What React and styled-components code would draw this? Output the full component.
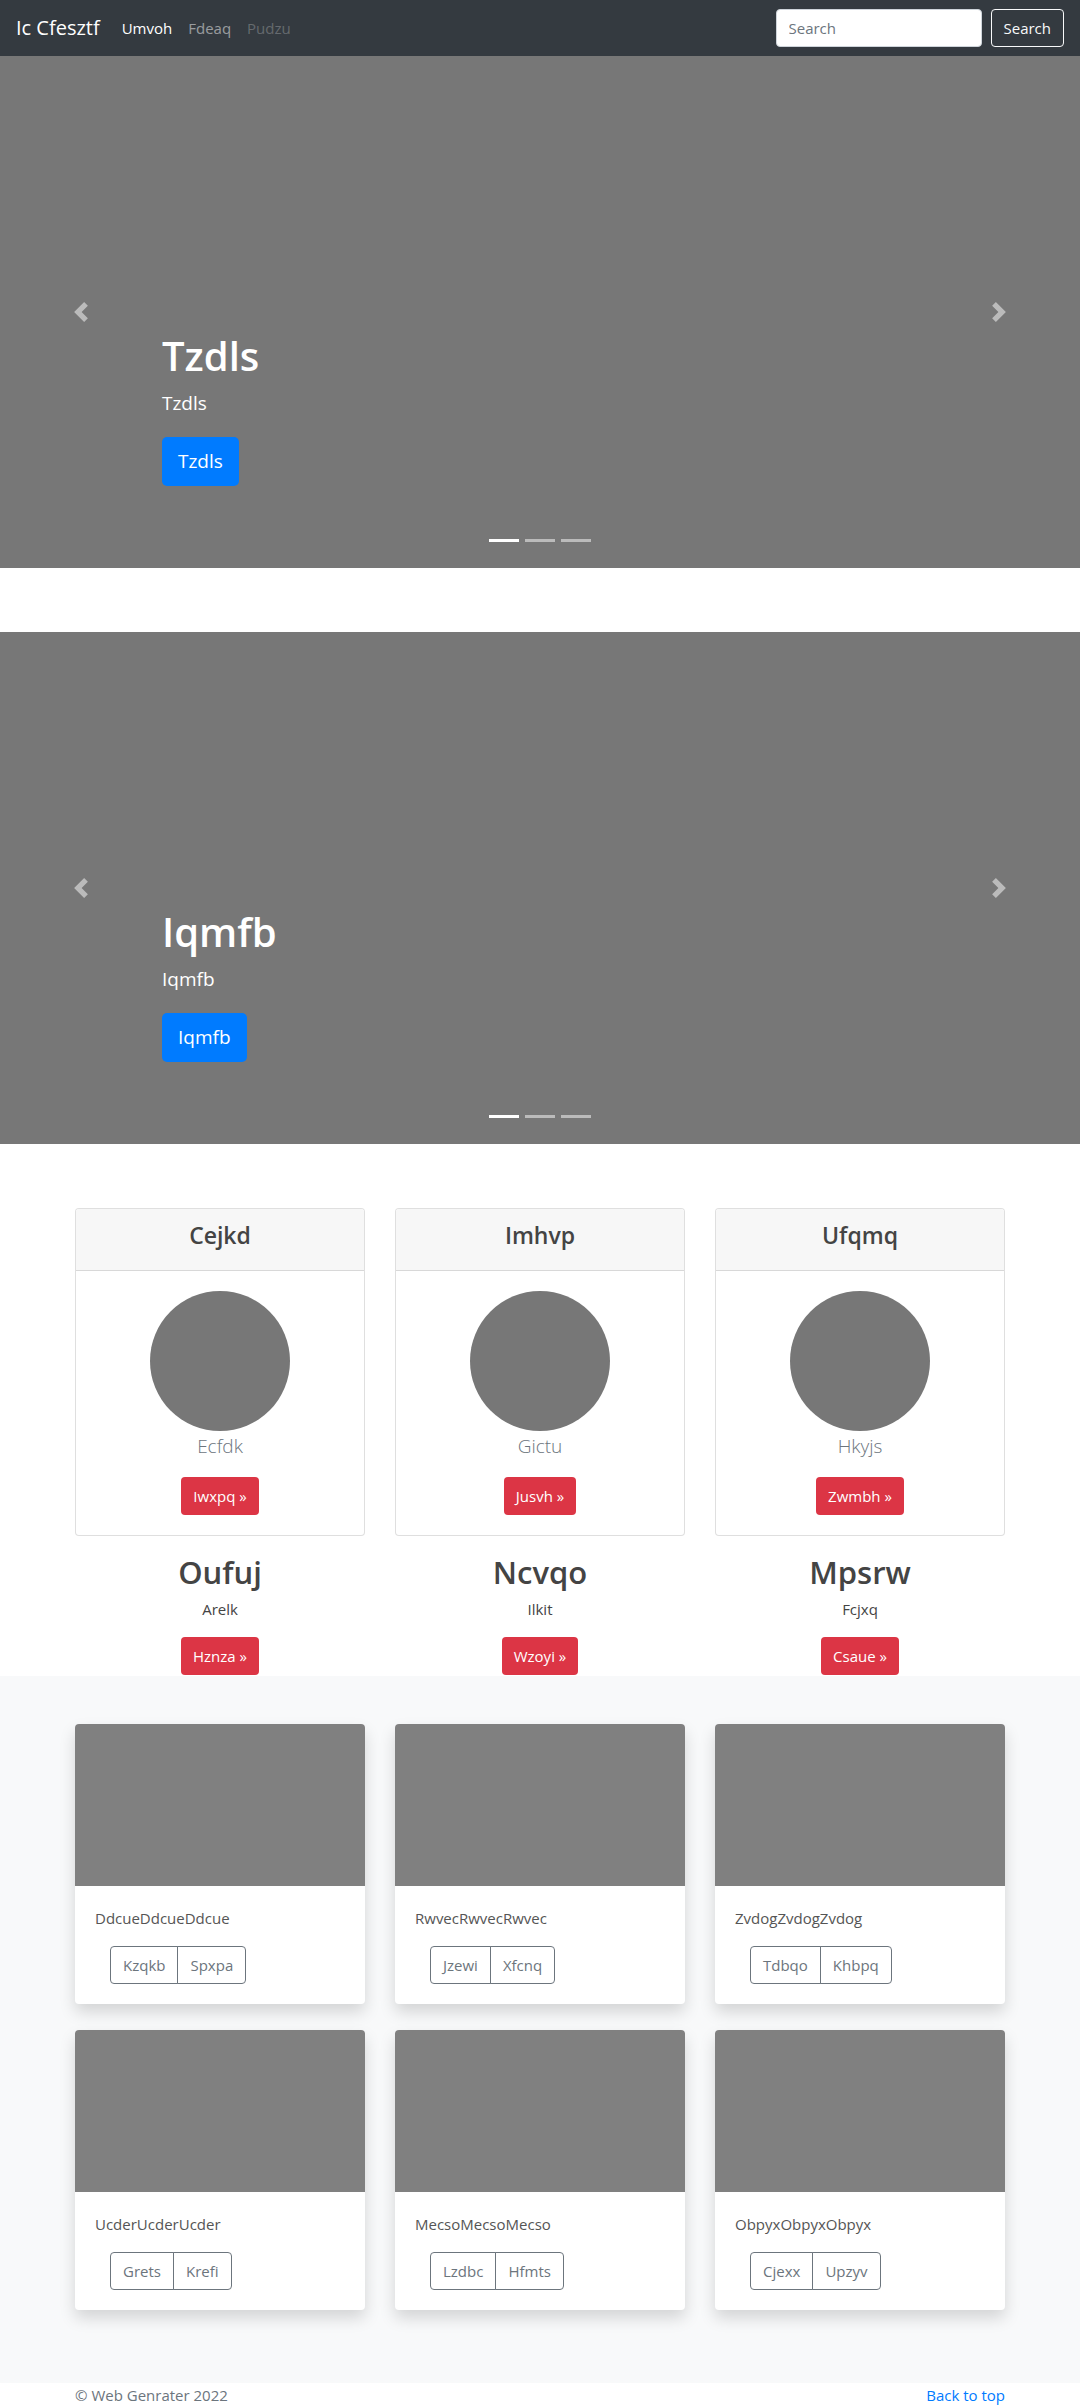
import React from "react";
import styled, { createGlobalStyle } from "styled-components";

const GlobalStyle = createGlobalStyle`
  * { box-sizing: border-box; }
  body {
    margin: 0;
    font-family: "Open Sans", "Noto Sans", Arial, sans-serif;
    font-size: 16px;
    line-height: 1.5;
    color: #212529;
    background: #fff;
  }
`;

const Navbar = styled.nav`
  height: 56px;
  background: #343a40;
  display: flex;
  align-items: center;
  padding: 0 16px;
`;

const Brand = styled.a`
  font-size: 20px;
  line-height: 30px;
  color: #fff;
  margin-right: 14px;
  text-decoration: none;
`;

const NavList = styled.div`
  display: flex;
`;

const NavLink = styled.a`
  padding: 8px;
  font-size: 15px;
  color: ${(p) => p.$color};
  text-decoration: none;
`;

const SearchForm = styled.form`
  margin-left: auto;
  display: flex;
  gap: 9px;
`;

const SearchInput = styled.input`
  width: 206px;
  height: 38px;
  border: 1px solid #ced4da;
  border-radius: 4px;
  padding: 6px 12px;
  font-family: inherit;
  font-size: 15px;
  color: #495057;
  &::placeholder { color: #6c757d; }
`;

const SearchButton = styled.button`
  height: 38px;
  padding: 0 12px;
  border: 1px solid #f8f9fa;
  border-radius: 4px;
  background: transparent;
  color: #f8f9fa;
  font-family: inherit;
  font-size: 15px;
`;

const Carousel = styled.div`
  position: relative;
  height: 512px;
  background: #777;
  margin-bottom: 64px;
  overflow: hidden;
`;

const Caption = styled.div`
  position: absolute;
  left: 15%;
  right: 15%;
  bottom: 82px;
  display: flex;
  flex-direction: column;
  align-items: flex-start;
  color: #fff;
`;

const CaptionTitle = styled.h1`
  margin: 0 0 8px;
  font-size: 40px;
  font-weight: 600;
  line-height: 48px;
`;

const CaptionText = styled.p`
  margin: 0 0 19px;
  font-size: 19px;
  line-height: 30px;
`;

const PrimaryButtonLg = styled.a`
  display: inline-block;
  background: #007bff;
  color: #fff;
  font-size: 19px;
  line-height: 31px;
  padding: 9px 16px;
  border-radius: 5px;
  text-decoration: none;
`;

const Control = styled.a`
  position: absolute;
  top: 0;
  bottom: 0;
  ${(p) => (p.$side === "prev" ? "left: 0;" : "right: 0;")}
  width: 15%;
  display: flex;
  align-items: center;
  justify-content: center;
  opacity: 0.5;
`;

const Indicators = styled.ol`
  position: absolute;
  left: 0;
  right: 0;
  bottom: 26px;
  margin: 0;
  padding: 0;
  list-style: none;
  display: flex;
  justify-content: center;
  gap: 6px;
`;

const Indicator = styled.li`
  width: 30px;
  height: 3px;
  background: #fff;
  opacity: ${(p) => (p.$active ? 1 : 0.5)};
`;

const Container = styled.div`
  width: 930px;
  margin: 0 auto;
`;

const ThreeCols = styled.div`
  display: grid;
  grid-template-columns: repeat(3, 290px);
  column-gap: 30px;
  row-gap: ${(p) => p.$rowGap || 0}px;
`;

const PriceCard = styled.div`
  border: 1px solid rgba(0, 0, 0, 0.125);
  border-radius: 4px;
  background: #fff;
  overflow: hidden;
`;

const CardHeader = styled.div`
  height: 62px;
  padding-top: 12px;
  background: #f7f7f7;
  border-bottom: 1px solid rgba(0, 0, 0, 0.125);
  text-align: center;
`;

const CardHeaderTitle = styled.h4`
  margin: 0;
  font-size: 23px;
  font-weight: 600;
  line-height: 28.8px;
  color: #444;
`;

const CardBody = styled.div`
  padding: 20px;
  text-align: center;
`;

const Circle = styled.div`
  width: 140px;
  height: 140px;
  border-radius: 50%;
  background: #777;
  margin: 0 auto;
`;

const Lead = styled.p`
  margin: 0 0 16px;
  font-size: 19px;
  font-weight: 300;
  line-height: 30px;
  color: #6c757d;
`;

const DangerButton = styled.a`
  display: inline-block;
  background: #dc3545;
  color: #fff;
  font-size: 15px;
  line-height: 24px;
  padding: 7px 12px;
  border-radius: 4px;
  text-decoration: none;
`;

const Feature = styled.div`
  margin-top: 17px;
  text-align: center;
`;

const FeatureTitle = styled.h2`
  margin: 0 0 6px;
  font-size: 31px;
  font-weight: 600;
  line-height: 38.4px;
  color: #444;
`;

const FeatureText = styled.p`
  margin: 0 0 16px;
  font-size: 15px;
  line-height: 24px;
  color: #444;
`;

const Album = styled.section`
  margin-top: 1px;
  background: #f8f9fa;
  padding: 48px 0 73px;
`;

const AlbumCard = styled.div`
  background: #fff;
  border-radius: 4px;
  box-shadow: 0 8px 16px rgba(0, 0, 0, 0.15);
  overflow: hidden;
`;

const Thumb = styled.div`
  height: 162px;
  background: #808080;
`;

const AlbumBody = styled.div`
  padding: 20px;
`;

const AlbumText = styled.p`
  margin: 0 0 16px;
  font-size: 15px;
  line-height: 24px;
  color: #555;
`;

const BtnGroup = styled.div`
  display: inline-flex;
  margin-left: 15px;
`;

const OutlineButton = styled.button`
  height: 38px;
  padding: 0 12px;
  background: transparent;
  border: 1px solid #6c757d;
  color: #6c757d;
  font-family: inherit;
  font-size: 15px;
  border-radius: ${(p) => (p.$first ? "4px 0 0 4px" : "0 4px 4px 0")};
  margin-left: ${(p) => (p.$first ? "0" : "-1px")};
`;

const Footer = styled.footer`
  width: 930px;
  margin: 0 auto;
  padding: 0 0 48px;
  display: flex;
  justify-content: space-between;
  font-size: 15px;
  line-height: 24px;
`;

const FooterText = styled.p`
  margin: 0;
  color: #6c757d;
`;

const FooterLink = styled.a`
  color: #007bff;
  text-decoration: none;
`;

const ChevronPrev = () => (
  <svg width="20" height="20" viewBox="0 0 8 8" fill="#fff">
    <path d="M5.25 0l-4 4 4 4 1.5-1.5L4.25 4l2.5-2.5L5.25 0z" />
  </svg>
);

const ChevronNext = () => (
  <svg width="20" height="20" viewBox="0 0 8 8" fill="#fff">
    <path d="M2.75 0l-1.5 1.5L3.75 4l-2.5 2.5L2.75 8l4-4-4-4z" />
  </svg>
);

const Slide = ({ title }) => (
  <Carousel>
    <Indicators>
      <Indicator $active />
      <Indicator />
      <Indicator />
    </Indicators>
    <Caption>
      <CaptionTitle>{title}</CaptionTitle>
      <CaptionText>{title}</CaptionText>
      <PrimaryButtonLg href="#">{title}</PrimaryButtonLg>
    </Caption>
    <Control $side="prev" href="#">
      <ChevronPrev />
    </Control>
    <Control $side="next" href="#">
      <ChevronNext />
    </Control>
  </Carousel>
);

const pricing = [
  { head: "Cejkd", lead: "Ecfdk", btn: "Iwxpq" },
  { head: "Imhvp", lead: "Gictu", btn: "Jusvh" },
  { head: "Ufqmq", lead: "Hkyjs", btn: "Zwmbh" },
];

const features = [
  { title: "Oufuj", text: "Arelk", btn: "Hznza" },
  { title: "Ncvqo", text: "Ilkit", btn: "Wzoyi" },
  { title: "Mpsrw", text: "Fcjxq", btn: "Csaue" },
];

const albums = [
  { text: "Ddcue", a: "Kzqkb", b: "Spxpa" },
  { text: "Rwvec", a: "Jzewi", b: "Xfcnq" },
  { text: "Zvdog", a: "Tdbqo", b: "Khbpq" },
  { text: "Ucder", a: "Grets", b: "Krefi" },
  { text: "Mecso", a: "Lzdbc", b: "Hfmts" },
  { text: "Obpyx", a: "Cjexx", b: "Upzyv" },
];

export default function App() {
  return (
    <>
      <GlobalStyle />
      <Navbar>
        <Brand href="#">Ic Cfesztf</Brand>
        <NavList>
          <NavLink $color="#fff" href="#">Umvoh</NavLink>
          <NavLink $color="rgba(255,255,255,0.5)" href="#">Fdeaq</NavLink>
          <NavLink $color="rgba(255,255,255,0.25)" href="#">Pudzu</NavLink>
        </NavList>
        <SearchForm onSubmit={(e) => e.preventDefault()}>
          <SearchInput placeholder="Search" />
          <SearchButton type="button">Search</SearchButton>
        </SearchForm>
      </Navbar>

      <Slide title="Tzdls" />
      <Slide title="Iqmfb" />

      <Container>
        <ThreeCols>
          {pricing.map((p) => (
            <PriceCard key={p.head}>
              <CardHeader>
                <CardHeaderTitle>{p.head}</CardHeaderTitle>
              </CardHeader>
              <CardBody>
                <Circle />
                <Lead>{p.lead}</Lead>
                <DangerButton href="#">{p.btn} »</DangerButton>
              </CardBody>
            </PriceCard>
          ))}
          {features.map((f) => (
            <Feature key={f.title}>
              <FeatureTitle>{f.title}</FeatureTitle>
              <FeatureText>{f.text}</FeatureText>
              <DangerButton href="#">{f.btn} »</DangerButton>
            </Feature>
          ))}
        </ThreeCols>
      </Container>

      <Album>
        <Container>
          <ThreeCols $rowGap={26}>
            {albums.map((a) => (
              <AlbumCard key={a.text}>
                <Thumb />
                <AlbumBody>
                  <AlbumText>{a.text + a.text + a.text}</AlbumText>
                  <BtnGroup>
                    <OutlineButton $first type="button">{a.a}</OutlineButton>
                    <OutlineButton type="button">{a.b}</OutlineButton>
                  </BtnGroup>
                </AlbumBody>
              </AlbumCard>
            ))}
          </ThreeCols>
        </Container>
      </Album>

      <Footer>
        <FooterText>© Web Genrater 2022</FooterText>
        <FooterLink href="#">Back to top</FooterLink>
      </Footer>
    </>
  );
}
